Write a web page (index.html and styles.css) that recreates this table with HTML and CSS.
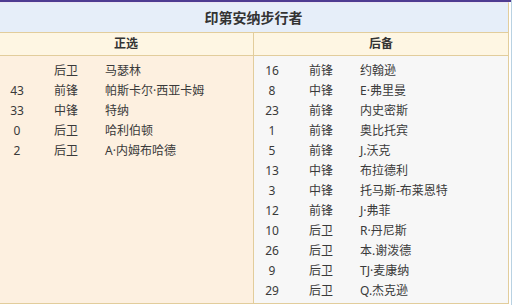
FILE: index.html
```html
<!DOCTYPE html>
<html lang="zh">
<head>
<meta charset="utf-8">
<title>印第安纳步行者</title>
<link rel="stylesheet" href="styles.css">
</head>
<body>
<div class="frame">
  <div class="topbar"></div>
  <div class="card">
    <div class="title">印第安纳步行者</div>
    <div class="subhead">
      <div class="sh left">正选</div>
      <div class="sh right">后备</div>
    </div>
    <div class="bodyrow">
      <div class="col starters">
        <div class="row"><span class="num"></span><span class="pos">后卫</span><span class="name">马瑟林</span></div>
        <div class="row"><span class="num">43</span><span class="pos">前锋</span><span class="name">帕斯卡尔·西亚卡姆</span></div>
        <div class="row"><span class="num">33</span><span class="pos">中锋</span><span class="name">特纳</span></div>
        <div class="row"><span class="num">0</span><span class="pos">后卫</span><span class="name">哈利伯顿</span></div>
        <div class="row"><span class="num">2</span><span class="pos">后卫</span><span class="name">A·内姆布哈德</span></div>
      </div>
      <div class="col bench">
        <div class="row"><span class="num">16</span><span class="pos">前锋</span><span class="name">约翰逊</span></div>
        <div class="row"><span class="num">8</span><span class="pos">中锋</span><span class="name">E·弗里曼</span></div>
        <div class="row"><span class="num">23</span><span class="pos">前锋</span><span class="name">内史密斯</span></div>
        <div class="row"><span class="num">1</span><span class="pos">前锋</span><span class="name">奥比托宾</span></div>
        <div class="row"><span class="num">5</span><span class="pos">前锋</span><span class="name">J.沃克</span></div>
        <div class="row"><span class="num">13</span><span class="pos">中锋</span><span class="name">布拉德利</span></div>
        <div class="row"><span class="num">3</span><span class="pos">中锋</span><span class="name">托马斯-布莱恩特</span></div>
        <div class="row"><span class="num">12</span><span class="pos">前锋</span><span class="name">J·弗菲</span></div>
        <div class="row"><span class="num">10</span><span class="pos">后卫</span><span class="name">R·丹尼斯</span></div>
        <div class="row"><span class="num">26</span><span class="pos">后卫</span><span class="name">本.谢泼德</span></div>
        <div class="row"><span class="num">9</span><span class="pos">后卫</span><span class="name">TJ·麦康纳</span></div>
        <div class="row"><span class="num">29</span><span class="pos">后卫</span><span class="name">Q.杰克逊</span></div>
      </div>
    </div>
  </div>
</div>
</body>
</html>
```

FILE: styles.css
```css
html, body {
  margin: 0;
  padding: 0;
  background: #ffffff;
}
body {
  font-family: "Noto Sans", "Noto Sans CJK SC", sans-serif;
  font-size: 12px;
  color: #3a3a3a;
}
.frame {
  width: 511px;
  height: 305px;
  border-right: 1px solid #b9d2e2;
  overflow: hidden;
}
.topbar {
  height: 2px;
  background: #4e3c92;
}
.card {
  margin-left: -2px;
  width: 509px;
  border: 1px solid #e2cd9c;
  border-top-color: #ece4f2;
  background: #fdf0e0;
}
.title {
  height: 29px;
  line-height: 29px;
  text-align: center;
  font-size: 14px;
  font-weight: bold;
  color: #333333;
  background: #e6eef9;
  border-bottom: 1px solid #e2cd9c;
}
.subhead {
  display: flex;
  height: 22px;
  background: #fef6e3;
  border-bottom: 1px solid #e2cd9c;
}
.sh {
  line-height: 22px;
  text-align: center;
  font-weight: bold;
  color: #333333;
}
.sh.left {
  width: 254px;
  border-right: 1px solid #e2cd9c;
}
.sh.right {
  flex: 1;
}
.bodyrow {
  display: flex;
  height: 247px;
}
.col {
  padding-top: 5px;
}
.starters {
  width: 254px;
  background: #fdf0e0;
  border-right: 1px solid #e2cd9c;
}
.bench {
  flex: 1;
  background: #f7f7f7;
}
.row {
  display: grid;
  grid-template-columns: 36px 70px 1fr;
  height: 20px;
  line-height: 20px;
}
.num {
  text-align: center;
}
.pos {
  padding-left: 19px;
}
.name {
  white-space: nowrap;
}
```
